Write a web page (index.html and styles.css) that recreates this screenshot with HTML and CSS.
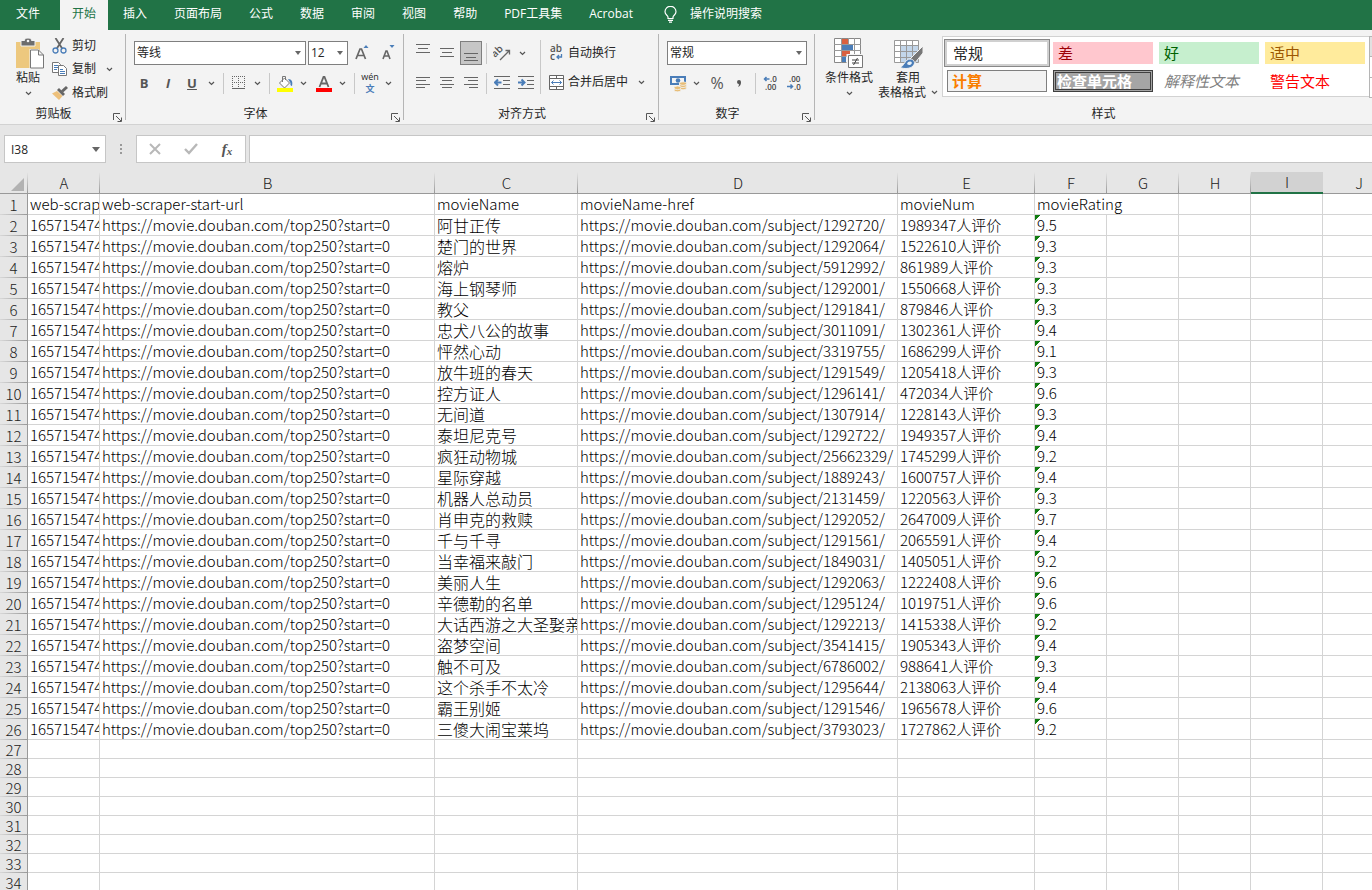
FILE: index.html
```html
<!DOCTYPE html>
<html lang="zh-CN">
<head>
<meta charset="utf-8">
<title>电影数据</title>
<link rel="stylesheet" href="styles.css">
</head>
<body>
<svg class="defs" width="0" height="0" aria-hidden="true">
  <symbol id="chev" viewBox="0 0 7 5"><path d="M1 1l2.500 2.500L6 1" fill="none" stroke="#555" stroke-width="1.200"/></symbol>
  <symbol id="launch" viewBox="0 0 9 9"><path d="M.5 7V.5H7M3 3l5 5M8.500 4.500v4h-4" fill="none" stroke="#555"/></symbol>
</svg>

<nav class="tabs">
  <button class="tab file">文件</button>
  <button class="tab active">开始</button>
  <button class="tab">插入</button>
  <button class="tab">页面布局</button>
  <button class="tab">公式</button>
  <button class="tab">数据</button>
  <button class="tab">审阅</button>
  <button class="tab">视图</button>
  <button class="tab">帮助</button>
  <button class="tab">PDF工具集</button>
  <button class="tab">Acrobat</button>
  <button class="tab search">
    <svg width="13" height="17" viewBox="0 0 13 17" fill="none" stroke="#fff" stroke-width="1.200"><path d="M4 12.500V11C3.800 9.500 1 8.500 1 5.800a5.300 5.300 0 0 1 11 0C12 8.500 9.200 9.500 9 11v1.500zM4 14.300h5M5 16.200h3"/></svg>
    操作说明搜索
  </button>
</nav>

<section class="ribbon">
  <div class="group clipboard">
    <div class="body">
      <button class="big paste">
        <svg width="28" height="31" viewBox="0 0 28 31"><path d="M0 4h24v26H0z" fill="#edc87e"/><path d="M5 2.500h3.500C8.500.8 10 0 12 0s3.500.8 3.500 2.500H19V8H5z" fill="#6d6d6d" stroke="#f3f3f3"/><circle cx="12" cy="3" r="1.300" fill="#f3f3f3"/><path d="M13.500 11h9l5.500 5.500V31H13.500z" fill="#f3f3f3"/><path d="M14.500 12h8l5 5v13h-13zM22.500 12v5h5" fill="#fff" stroke="#777"/></svg>
        <span>粘贴</span>
        <svg class="chev" width="7" height="5"><use href="#chev"/></svg>
      </button>
      <div class="stack">
        <button class="item">
          <svg width="16" height="16" viewBox="0 0 16 16" fill="none"><path d="M3.500 0L10.500 11M11.500 0L4.500 11" stroke="#666" stroke-width="1.800"/><circle cx="3.500" cy="12.500" r="2.500" stroke="#4a7db8" stroke-width="1.300"/><circle cx="11.500" cy="12.500" r="2.500" stroke="#4a7db8" stroke-width="1.300"/></svg>
          剪切
        </button>
        <div class="pair">
          <button class="item">
            <svg width="16" height="16" viewBox="0 0 16 16"><path d="M.5 1.500h6l2 2v8h-8z" fill="#fff" stroke="#777"/><path d="M2 4.500h4M2 6.500h4M2 8.500h3" stroke="#4a7db8"/><path d="M6.500 4.500h5l3 3v7h-8z" fill="#fff" stroke="#777"/><path d="M8 8.500h3M8 10.500h5M8 12.500h5" stroke="#4a7db8"/></svg>
            复制
          </button>
          <button class="drop" aria-label="复制选项"><svg width="7" height="5"><use href="#chev"/></svg></button>
        </div>
        <button class="item">
          <svg width="16" height="16" viewBox="0 0 16 16"><path d="M0 8.500L5 6l5.500 5-3.500 4z" fill="#edc07b"/><path d="M5 5l2-2 6 6-2 2z" fill="#666"/><path d="M9 5.500L14 1l2 2-5 4.500z" fill="#666"/></svg>
          格式刷
        </button>
      </div>
    </div>
    <div class="foot"><span>剪贴板</span><button class="launch" aria-label="剪贴板设置"><svg width="9" height="9"><use href="#launch"/></svg></button></div>
  </div>

  <div class="group font">
    <div class="body rows">
      <div class="row inset">
        <span class="combo wide"><select aria-label="字体"><option>等线</option></select></span>
        <span class="combo small"><select aria-label="字号"><option>12</option></select></span>
        <button class="tool glyph" aria-label="增大字号"><svg width="14" height="18" viewBox="0 0 14 18"><path d="M1 15L5 5h1.500l4 10M2.500 11.500h6.500" fill="none" stroke="#666" stroke-width="1.700"/><path d="M8.500 4h5L11 1z" fill="#4a7db8"/></svg></button>
        <button class="tool glyph" aria-label="减小字号"><svg width="14" height="18" viewBox="0 0 14 18"><path d="M2 15l3-8h1l3 8M3 12h5" fill="none" stroke="#666" stroke-width="1.600"/><path d="M8.500 1h5L11 4z" fill="#4a7db8"/></svg></button>
      </div>
      <div class="row">
        <button class="tool glyph bold">B</button>
        <button class="tool glyph italic">I</button>
        <button class="tool glyph under">U</button>
        <button class="drop" aria-label="下划线选项"><svg width="7" height="5"><use href="#chev"/></svg></button>
        <i class="sep"></i>
        <button class="tool" aria-label="边框"><svg width="14" height="14" viewBox="0 0 14 14" fill="none" stroke="#666"><path d="M.5 0v12M6.500 0v12M12.500 0v12M0 .5h13M0 6.500h13" stroke-dasharray="1 1"/><path d="M0 12.500h13"/></svg></button>
        <button class="drop" aria-label="边框选项"><svg width="7" height="5"><use href="#chev"/></svg></button>
        <i class="sep"></i>
        <button class="tool" aria-label="填充颜色"><svg width="17" height="17" viewBox="0 0 17 17"><path d="M2.500 8l5-5 5 5-5 5z" fill="#fff" stroke="#777"/><path d="M5.500 7V1.500h3V5" fill="none" stroke="#777"/><path d="M11 4c4 0 5 3 4 7-1 0-2-1-1.500-3z" fill="#4a7db8"/><path d="M0 13h16v4H0z" fill="#ff0"/></svg></button>
        <button class="drop" aria-label="填充选项"><svg width="7" height="5"><use href="#chev"/></svg></button>
        <button class="tool spaced" aria-label="字体颜色"><svg width="16" height="17" viewBox="0 0 16 17"><path d="M3.500 12l4-10h1l4 10M5 8.500h6" fill="none" stroke="#666" stroke-width="1.800"/><path d="M0 13h16v4H0z" fill="red"/></svg></button>
        <button class="drop" aria-label="颜色选项"><svg width="7" height="5"><use href="#chev"/></svg></button>
        <i class="sep"></i>
        <button class="tool pinyin" aria-label="拼音"><span>wén</span><b>文</b></button>
        <button class="drop" aria-label="拼音选项"><svg width="7" height="5"><use href="#chev"/></svg></button>
      </div>
    </div>
    <div class="foot"><span>字体</span><button class="launch" aria-label="字体设置"><svg width="9" height="9"><use href="#launch"/></svg></button></div>
  </div>

  <div class="group align">
    <div class="body">
      <div class="rows">
        <div class="row gap">
          <button class="tool" aria-label="顶端对齐"><svg width="14" height="18" stroke="#666"><path d="M0 .5h14M2 4.500h10M0 8.500h14"/></svg></button>
          <button class="tool" aria-label="垂直居中"><svg width="14" height="18" stroke="#666"><path d="M0 4.500h14M2 8.500h10M0 12.500h14"/></svg></button>
          <button class="tool on" aria-label="底端对齐"><svg width="14" height="18" stroke="#666"><path d="M0 9.500h14M2 13.500h10M0 16.500h14"/></svg></button>
          <i class="sep"></i>
          <button class="tool" aria-label="方向"><svg width="18" height="18" viewBox="0 0 18 18"><text x="0" y="9" transform="rotate(-45 7 9)" class="ab">ab</text><path d="M7 16l9-9M12.500 6.500H16.500V10.500" fill="none" stroke="#666" stroke-width="1.300"/></svg></button>
          <button class="drop" aria-label="方向选项"><svg width="7" height="5"><use href="#chev"/></svg></button>
        </div>
        <div class="row gap">
          <button class="tool" aria-label="左对齐"><svg width="14" height="12" stroke="#666"><path d="M0 .5h14M0 3.500h10M0 7.500h14M0 10.500h9"/></svg></button>
          <button class="tool" aria-label="居中"><svg width="14" height="12" stroke="#666"><path d="M0 .5h14M2 3.500h10M0 7.500h14M2 10.500h10"/></svg></button>
          <button class="tool" aria-label="右对齐"><svg width="14" height="12" stroke="#666"><path d="M0 .5h14M4 3.500h10M0 7.500h14M5 10.500h9"/></svg></button>
          <i class="sep"></i>
          <button class="tool" aria-label="减少缩进"><svg width="16" height="14" viewBox="0 0 16 14" fill="none"><path d="M0 .5h16M9 4.500h7M9 8.500h7M0 12.500h16" stroke="#666"/><path d="M7.500 6.500H2M4 3.500l-3 3 3 3" stroke="#4a7db8" stroke-width="2"/></svg></button>
          <button class="tool" aria-label="增加缩进"><svg width="16" height="14" viewBox="0 0 16 14" fill="none"><path d="M0 .5h16M9 4.500h7M9 8.500h7M0 12.500h16" stroke="#666"/><path d="M0 6.500h6M3.500 3.500l3 3-3 3" stroke="#4a7db8" stroke-width="2"/></svg></button>
        </div>
      </div>
      <i class="sep tall"></i>
      <div class="rows">
        <button class="row item">
          <svg width="15" height="17" viewBox="0 0 15 17"><text x="1" y="8" class="ab">ab</text><text x="1" y="16" class="ab">c</text><path d="M12.500 10v3H8.500M10 11l-2 2 2 2" fill="none" stroke="#4a7db8" stroke-width="1.300"/></svg>
          自动换行
        </button>
        <div class="row">
          <button class="item">
            <svg width="15" height="15" viewBox="0 0 15 15" fill="none"><path d="M.5.5h14v14H.5z" fill="#fff" stroke="#666"/><path d="M0 3.500h15M0 11.500h15M7.500 0v3.500M7.500 11.500V15" stroke="#666"/><path d="M2.500 7.500h10M4.500 5.500l-2 2 2 2M10.500 5.500l2 2-2 2" stroke="#4a7db8"/></svg>
            合并后居中
          </button>
          <button class="drop far" aria-label="合并选项"><svg width="7" height="5"><use href="#chev"/></svg></button>
        </div>
      </div>
    </div>
    <div class="foot"><span>对齐方式</span><button class="launch" aria-label="对齐设置"><svg width="9" height="9"><use href="#launch"/></svg></button></div>
  </div>

  <div class="group number">
    <div class="body rows">
      <div class="row"><span class="combo full"><select aria-label="数字格式"><option>常规</option></select></span></div>
      <div class="row">
        <button class="tool" aria-label="会计格式"><svg width="17" height="17" viewBox="0 0 17 17"><path d="M0 1h16v9H0z" fill="#4a7db8"/><path d="M2 3h12v5H2z" fill="#f3f3f3"/><circle cx="8" cy="5.500" r="2.300" fill="#4a7db8"/><path d="M9 8h8v7H9z" fill="#f3f3f3"/><g fill="#e8bd76" stroke="#f3f3f3" stroke-width=".8"><ellipse cx="13" cy="13" rx="3.500" ry="1.800"/><ellipse cx="13" cy="10.800" rx="3.500" ry="1.800"/><ellipse cx="13" cy="8.600" rx="3.500" ry="1.800"/><ellipse cx="7.500" cy="15" rx="3.500" ry="1.800"/><ellipse cx="7.500" cy="12.800" rx="3.500" ry="1.800"/></g></svg></button>
        <button class="drop" aria-label="会计选项"><svg width="7" height="5"><use href="#chev"/></svg></button>
        <button class="tool spaced percent">%</button>
        <button class="tool" aria-label="千位分隔"><svg width="6" height="9" viewBox="0 0 6 9"><path d="M1 3a2 2 0 1 1 4 0c0 3-1 4-3 5 1-1.500 1-2 .8-3A2 2 0 0 1 1 3z" fill="#555"/></svg></button>
        <i class="sep"></i>
        <button class="tool" aria-label="增加小数"><svg width="16" height="16" viewBox="0 0 16 16"><text x="7" y="7" class="dec">.0</text><text x="2" y="15" class="dec">.00</text><path d="M6.500 4H2M3.500 2l-2 2 2 2" fill="none" stroke="#4a7db8" stroke-width="1.500"/></svg></button>
        <button class="tool spacer" aria-label="减少小数"><svg width="16" height="16" viewBox="0 0 16 16"><text x="2" y="7" class="dec">.00</text><text x="7" y="15" class="dec">.0</text><path d="M0 11.500h5M3.500 9.500l2 2-2 2" fill="none" stroke="#4a7db8" stroke-width="1.500"/></svg></button>
      </div>
    </div>
    <div class="foot"><span>数字</span><button class="launch" aria-label="数字设置"><svg width="9" height="9"><use href="#launch"/></svg></button></div>
  </div>

  <div class="group styles">
    <div class="body">
      <button class="big cond">
        <svg width="31" height="31" viewBox="0 0 31 31"><path d="M.5.5h26v24H.5z" fill="#fff" stroke="#888"/><path d="M7.500 0v25M14.500 0v25M20.500 0v25M0 6.500h27M0 12.500h27M0 18.500h27" stroke="#999"/><path d="M8 1h6v5H8z" fill="#d9603f"/><path d="M8 7h11v5H8z" fill="#4a7db8"/><path d="M8 13h8v5H8z" fill="#d9603f"/><path d="M8 19h4v5H8z" fill="#4a7db8"/><path d="M12.500 16H30v15H12.500z" fill="#f3f3f3"/><path d="M14.500 17.500h14v12h-14z" fill="#fff" stroke="#777"/><path d="M18 22h7M18 25h7M23.500 20l-4 7" stroke="#444" fill="none"/></svg>
        <span>条件格式</span>
        <svg class="chev" width="7" height="5"><use href="#chev"/></svg>
      </button>
      <button class="big fmt">
        <svg width="29" height="31" viewBox="0 0 29 31"><path d="M.5 2.500h24v22H.5z" fill="#fff"/><path d="M7 8h17v16H7z" fill="#c3d6ea"/><path d="M.5 2.500h24v22H.5zM6.500 2v23M12.500 2v23M18.500 2v23M0 7.500h25M0 13.500h25M0 19.500h25" fill="none" stroke="#999"/><path d="M29 8v7l-9 11-5-4z" fill="#777" stroke="#f3f3f3"/><path d="M6 29.500c4-1 5-8.500 10-8.500 4 0 6 4 3 7-3 3-9 3-13 1.500z" fill="#4a7db8" stroke="#f3f3f3"/><path d="M13 26c1-3 4-3 5-1-1 2-3 3-5 1z" fill="#e9f1f8"/></svg>
        <span>套用</span>
        <span class="line">表格格式<svg class="chev" width="7" height="5"><use href="#chev"/></svg></span>
      </button>
      <div class="gallery">
        <button class="style normal">常规</button>
        <button class="style bad">差</button>
        <button class="style good">好</button>
        <button class="style neutral">适中</button>
        <button class="style calc">计算</button>
        <button class="style check">检查单元格</button>
        <button class="style explain">解释性文本</button>
        <button class="style warn">警告文本</button>
      </div>
      <div class="scroller"><button class="off" aria-label="上一行"></button><button aria-label="下一行"></button><button aria-label="更多样式"></button></div>
    </div>
    <div class="foot"><span>样式</span></div>
  </div>
</section>

<section class="formula">
  <div class="namebox"><input type="text" value="I38" aria-label="名称框"></div>
  <svg class="dots" width="2" height="12" fill="#999"><path d="M0 1h2v2H0zM0 5h2v2H0zM0 9h2v2H0z"/></svg>
  <div class="actions">
    <button aria-label="取消"><svg width="12" height="12" fill="none" stroke="#b8b8b8" stroke-width="2"><path d="M1 1l10 10M11 1L1 11"/></svg></button>
    <button aria-label="输入"><svg width="14" height="12" fill="none" stroke="#b8b8b8" stroke-width="2.400"><path d="M1 6l4 4L13 1"/></svg></button>
    <button class="fx">f<small>x</small></button>
  </div>
  <input class="entry" type="text" aria-label="编辑栏">
</section>

<main class="sheet">
<table>
<colgroup><col class="w-head"><col class="w-std"><col class="w-url"><col class="w-name"><col class="w-href"><col class="w-num"><col class="w-std"><col class="w-std"><col class="w-std"><col class="w-std"><col class="w-std"></colgroup>
<thead><tr><th class="corner"><svg width="13" height="13"><path d="M13 0v13H0z" fill="#b2b2b2"/></svg></th><th>A</th><th>B</th><th>C</th><th>D</th><th>E</th><th>F</th><th>G</th><th>H</th><th class="picked">I</th><th>J</th></tr></thead>
<tbody>
<tr><th>1</th><td>web-scraper-order</td><td>web-scraper-start-url</td><td>movieName</td><td>movieName-href</td><td>movieNum</td><td colspan="2">movieRating</td><td></td><td></td><td></td></tr>
<tr><th>2</th><td>165715474</td><td>https://movie.douban.com/top250?start=0</td><td class="zh">阿甘正传</td><td>https://movie.douban.com/subject/1292720/</td><td>1989347人评价</td><td class="flag">9.5</td><td></td><td></td><td></td><td></td></tr>
<tr><th>3</th><td>165715474</td><td>https://movie.douban.com/top250?start=0</td><td class="zh">楚门的世界</td><td>https://movie.douban.com/subject/1292064/</td><td>1522610人评价</td><td class="flag">9.3</td><td></td><td></td><td></td><td></td></tr>
<tr><th>4</th><td>165715474</td><td>https://movie.douban.com/top250?start=0</td><td class="zh">熔炉</td><td>https://movie.douban.com/subject/5912992/</td><td>861989人评价</td><td class="flag">9.3</td><td></td><td></td><td></td><td></td></tr>
<tr><th>5</th><td>165715474</td><td>https://movie.douban.com/top250?start=0</td><td class="zh">海上钢琴师</td><td>https://movie.douban.com/subject/1292001/</td><td>1550668人评价</td><td class="flag">9.3</td><td></td><td></td><td></td><td></td></tr>
<tr><th>6</th><td>165715474</td><td>https://movie.douban.com/top250?start=0</td><td class="zh">教父</td><td>https://movie.douban.com/subject/1291841/</td><td>879846人评价</td><td class="flag">9.3</td><td></td><td></td><td></td><td></td></tr>
<tr><th>7</th><td>165715474</td><td>https://movie.douban.com/top250?start=0</td><td class="zh">忠犬八公的故事</td><td>https://movie.douban.com/subject/3011091/</td><td>1302361人评价</td><td class="flag">9.4</td><td></td><td></td><td></td><td></td></tr>
<tr><th>8</th><td>165715474</td><td>https://movie.douban.com/top250?start=0</td><td class="zh">怦然心动</td><td>https://movie.douban.com/subject/3319755/</td><td>1686299人评价</td><td class="flag">9.1</td><td></td><td></td><td></td><td></td></tr>
<tr><th>9</th><td>165715474</td><td>https://movie.douban.com/top250?start=0</td><td class="zh">放牛班的春天</td><td>https://movie.douban.com/subject/1291549/</td><td>1205418人评价</td><td class="flag">9.3</td><td></td><td></td><td></td><td></td></tr>
<tr><th>10</th><td>165715474</td><td>https://movie.douban.com/top250?start=0</td><td class="zh">控方证人</td><td>https://movie.douban.com/subject/1296141/</td><td>472034人评价</td><td class="flag">9.6</td><td></td><td></td><td></td><td></td></tr>
<tr><th>11</th><td>165715474</td><td>https://movie.douban.com/top250?start=0</td><td class="zh">无间道</td><td>https://movie.douban.com/subject/1307914/</td><td>1228143人评价</td><td class="flag">9.3</td><td></td><td></td><td></td><td></td></tr>
<tr><th>12</th><td>165715474</td><td>https://movie.douban.com/top250?start=0</td><td class="zh">泰坦尼克号</td><td>https://movie.douban.com/subject/1292722/</td><td>1949357人评价</td><td class="flag">9.4</td><td></td><td></td><td></td><td></td></tr>
<tr><th>13</th><td>165715474</td><td>https://movie.douban.com/top250?start=0</td><td class="zh">疯狂动物城</td><td>https://movie.douban.com/subject/25662329/</td><td>1745299人评价</td><td class="flag">9.2</td><td></td><td></td><td></td><td></td></tr>
<tr><th>14</th><td>165715474</td><td>https://movie.douban.com/top250?start=0</td><td class="zh">星际穿越</td><td>https://movie.douban.com/subject/1889243/</td><td>1600757人评价</td><td class="flag">9.4</td><td></td><td></td><td></td><td></td></tr>
<tr><th>15</th><td>165715474</td><td>https://movie.douban.com/top250?start=0</td><td class="zh">机器人总动员</td><td>https://movie.douban.com/subject/2131459/</td><td>1220563人评价</td><td class="flag">9.3</td><td></td><td></td><td></td><td></td></tr>
<tr><th>16</th><td>165715474</td><td>https://movie.douban.com/top250?start=0</td><td class="zh">肖申克的救赎</td><td>https://movie.douban.com/subject/1292052/</td><td>2647009人评价</td><td class="flag">9.7</td><td></td><td></td><td></td><td></td></tr>
<tr><th>17</th><td>165715474</td><td>https://movie.douban.com/top250?start=0</td><td class="zh">千与千寻</td><td>https://movie.douban.com/subject/1291561/</td><td>2065591人评价</td><td class="flag">9.4</td><td></td><td></td><td></td><td></td></tr>
<tr><th>18</th><td>165715474</td><td>https://movie.douban.com/top250?start=0</td><td class="zh">当幸福来敲门</td><td>https://movie.douban.com/subject/1849031/</td><td>1405051人评价</td><td class="flag">9.2</td><td></td><td></td><td></td><td></td></tr>
<tr><th>19</th><td>165715474</td><td>https://movie.douban.com/top250?start=0</td><td class="zh">美丽人生</td><td>https://movie.douban.com/subject/1292063/</td><td>1222408人评价</td><td class="flag">9.6</td><td></td><td></td><td></td><td></td></tr>
<tr><th>20</th><td>165715474</td><td>https://movie.douban.com/top250?start=0</td><td class="zh">辛德勒的名单</td><td>https://movie.douban.com/subject/1295124/</td><td>1019751人评价</td><td class="flag">9.6</td><td></td><td></td><td></td><td></td></tr>
<tr><th>21</th><td>165715474</td><td>https://movie.douban.com/top250?start=0</td><td class="zh">大话西游之大圣娶亲</td><td>https://movie.douban.com/subject/1292213/</td><td>1415338人评价</td><td class="flag">9.2</td><td></td><td></td><td></td><td></td></tr>
<tr><th>22</th><td>165715474</td><td>https://movie.douban.com/top250?start=0</td><td class="zh">盗梦空间</td><td>https://movie.douban.com/subject/3541415/</td><td>1905343人评价</td><td class="flag">9.4</td><td></td><td></td><td></td><td></td></tr>
<tr><th>23</th><td>165715474</td><td>https://movie.douban.com/top250?start=0</td><td class="zh">触不可及</td><td>https://movie.douban.com/subject/6786002/</td><td>988641人评价</td><td class="flag">9.3</td><td></td><td></td><td></td><td></td></tr>
<tr><th>24</th><td>165715474</td><td>https://movie.douban.com/top250?start=0</td><td class="zh">这个杀手不太冷</td><td>https://movie.douban.com/subject/1295644/</td><td>2138063人评价</td><td class="flag">9.4</td><td></td><td></td><td></td><td></td></tr>
<tr><th>25</th><td>165715474</td><td>https://movie.douban.com/top250?start=0</td><td class="zh">霸王别姬</td><td>https://movie.douban.com/subject/1291546/</td><td>1965678人评价</td><td class="flag">9.6</td><td></td><td></td><td></td><td></td></tr>
<tr><th>26</th><td>165715474</td><td>https://movie.douban.com/top250?start=0</td><td class="zh">三傻大闹宝莱坞</td><td>https://movie.douban.com/subject/3793023/</td><td>1727862人评价</td><td class="flag">9.2</td><td></td><td></td><td></td><td></td></tr>
</tbody>
<tbody class="blank">
<tr><th>27</th><td></td><td></td><td></td><td></td><td></td><td></td><td></td><td></td><td></td><td></td></tr>
<tr><th>28</th><td></td><td></td><td></td><td></td><td></td><td></td><td></td><td></td><td></td><td></td></tr>
<tr><th>29</th><td></td><td></td><td></td><td></td><td></td><td></td><td></td><td></td><td></td><td></td></tr>
<tr><th>30</th><td></td><td></td><td></td><td></td><td></td><td></td><td></td><td></td><td></td><td></td></tr>
<tr><th>31</th><td></td><td></td><td></td><td></td><td></td><td></td><td></td><td></td><td></td><td></td></tr>
<tr><th>32</th><td></td><td></td><td></td><td></td><td></td><td></td><td></td><td></td><td></td><td></td></tr>
<tr><th>33</th><td></td><td></td><td></td><td></td><td></td><td></td><td></td><td></td><td></td><td></td></tr>
<tr><th>34</th><td></td><td></td><td></td><td></td><td></td><td></td><td></td><td></td><td></td><td></td></tr>
</tbody>
</table>
</main>
</body>
</html>
```

FILE: styles.css
```css
* { box-sizing: border-box; }

body {
  margin: 0;
  height: 100vh;
  display: flex;
  flex-direction: column;
  overflow: hidden;
  background: #e6e6e6;
  color: #262626;
  font: 12px/16px "Open Sans", "Noto Sans CJK SC", sans-serif;
}

button, input, select { font: inherit; color: inherit; }
button { background: none; border: 0; padding: 0; white-space: nowrap; }
svg { flex: none; display: block; }
.defs { position: absolute; }

/* Tab strip */
.tabs { flex: none; display: flex; gap: 3px; height: 30px; background: #217346; color: #fff; }
.tab { padding: 0 12px 2px; }
.tab.file { padding: 0 17px 2px 16px; }
.tab.active { background: #f3f3f3; color: #217346; }
.tab.search { display: flex; align-items: center; gap: 13px; padding-left: 16px; }

/* Ribbon */
.ribbon { flex: none; display: flex; padding: 4px 0; background: #f3f3f3; border-bottom: 1px solid #d2d2d2; }
.group { flex: none; display: flex; flex-direction: column; border-right: 1px solid #b5b5b5; }
.body { display: flex; height: 72px; }
.rows { display: flex; flex-direction: column; gap: 6px; padding-top: 7px; }
.row { display: flex; align-items: center; height: 24px; }
.foot { display: grid; grid-template-columns: 1fr 18px; height: 14px; line-height: 16px; text-align: center; }
.launch { justify-self: end; align-self: end; margin-right: 3px; }

.clipboard { width: 126px; }
.clipboard .body { padding-left: 16px; gap: 8px; }
.font { width: 278px; }
.font .body { padding-left: 6px; }
.inset { padding-left: 2px; gap: 2px; }
.align { width: 255px; }
.align .body { padding-left: 8px; }
.number { width: 156px; }
.number .body { padding-left: 8px; }
.styles { flex: 1; min-width: 0; border-right: 0; }
.styles .body { padding-left: 4px; }

.big { display: flex; flex-direction: column; align-items: center; padding-top: 4px; }
.big span { line-height: 15px; }
.big svg + span { margin-top: 1px; }
.big .chev { margin-top: 6px; }
.paste span, .paste .chev { margin-right: 4px; }
.cond { width: 60px; }
.fmt { width: 58px; }
.line { display: flex; align-items: center; gap: 5px; }
.big .line .chev { margin-top: 0; }

.item { display: flex; align-items: center; gap: 4px; height: 23px; }
.pair { display: flex; align-items: center; gap: 6px; }
.tool { display: flex; align-items: center; justify-content: center; width: 22px; height: 24px; }
.tool.on { background: #c6c6c6; border: 1px solid #7f7f7f; }
.glyph { width: 24px; font-size: 13px; font-weight: 700; color: #555; }
.italic { font-style: italic; }
.under { text-decoration: underline; }
.gap { gap: 2px; }
.gap .sep { margin: 0 2px; }
.drop { display: flex; align-items: center; justify-content: center; width: 14px; height: 24px; }
.far { margin-left: 6px; }
.sep { width: 1px; height: 21px; margin: 0 4px 0 5px; background: #c8c8c8; }
.sep.tall { height: 54px; margin: 6px 8px 0 3px; }
.spaced { margin-left: 3px; }
.spacer { margin-left: 2px; }
.percent { font-size: 16px; color: #555; }
.pinyin { flex-direction: column; font-size: 9px; line-height: 12px; }
.pinyin b { color: #4a7db8; font-size: 9px; line-height: 12px; }
.ab { font: 600 10px "Open Sans", sans-serif; fill: #555; }
.dec { font: 600 8px "Open Sans", sans-serif; fill: #444; }

.combo { position: relative; display: flex; height: 24px; background: #fff; border: 1px solid #7f7f7f; }
.combo select { width: 100%; border: 0; background: none; appearance: none; padding: 0 2px; }
.combo::after, .namebox::after {
  content: "";
  position: absolute;
  right: 4px;
  top: 9px;
  border: 3px solid transparent;
  border-top: 4px solid #666;
  border-bottom: 0;
}
.wide { width: 172px; }
.small { width: 40px; }
.full { width: 140px; }

.gallery {
  flex: 1;
  display: grid;
  grid-template-columns: repeat(4, 100px);
  grid-template-rows: 22px 22px;
  gap: 6px;
  align-self: flex-start;
  margin: 2px 0 0 5px;
  padding: 5px 4px 4px;
  background: #fff;
  border: 1px solid #d2d2d2;
  border-right: 0;
}
.style { padding: 0 5px; text-align: left; font-size: 15px; line-height: 18px; }
.normal { background: #fff; box-shadow: 0 0 0 2px #d0d0d0, 0 0 0 3px #888; padding: 0 6px; }
.bad { background: #ffc7ce; color: #9c0006; }
.good { background: #c6efce; color: #006100; }
.neutral { background: #ffeb9c; color: #9c5700; }
.calc { background: #f2f2f2; color: #fa7d00; border: 1px solid #7f7f7f; font-weight: 600; padding: 0 4px; }
.check { background: #a5a5a5; color: #fff; border: 3px double #3f3f3f; font-weight: 600; padding: 0 1px; line-height: 14px; }
.explain { color: #7f7f7f; font-style: italic; }
.warn { color: #f00; }
.scroller { width: 3px; height: 62px; margin-top: 2px; display: grid; grid-template-rows: 1fr 1fr 1fr; border-left: 1px solid #b5b5b5; border-bottom: 1px solid #b5b5b5; }
.scroller button { background: #fff; border-top: 1px solid #b5b5b5; }
.scroller .off { background: #e1e1e1; }
.styles .foot { padding-left: 38px; }

/* Formula bar */
.formula { flex: none; display: flex; align-items: flex-start; height: 47px; padding: 10px 0 0 4px; }
.namebox { position: relative; width: 102px; height: 28px; background: #fff; border: 1px solid #c6c6c6; }
.namebox input { width: 80px; height: 26px; border: 0; padding: 0 6px; background: none; }
.namebox::after { right: 5px; top: 11px; border-width: 5px 4px 0; }
.dots { margin: 8px 14px 0; }
.actions { display: flex; width: 110px; height: 28px; background: #fff; border: 1px solid #c6c6c6; }
.actions button { flex: 1; display: flex; align-items: center; justify-content: center; }
.actions .fx { font: italic 700 15px "Liberation Serif", serif; color: #555; }
.fx small { font-size: 11px; padding-top: 4px; }
.entry { flex: 1; min-width: 0; height: 28px; margin-left: 3px; background: #fff; border: 1px solid #c6c6c6; border-right: 0; }

/* Sheet */
.sheet { flex: 1; min-height: 0; overflow: hidden; }
table { width: 1395px; table-layout: fixed; border-collapse: separate; border-spacing: 0; color: #000; font: 300 15px/20px "Noto Sans CJK SC", sans-serif; }
.w-head { width: 28px; }
.w-std { width: 72px; }
.w-url { width: 335px; }
.w-name { width: 143px; }
.w-href { width: 320px; }
.w-num { width: 137px; }
th, td { height: 21px; padding: 0; overflow: hidden; white-space: nowrap; }
td { padding-left: 2px; background: #fff; border-right: 1px solid #d4d4d4; border-bottom: 1px solid #d4d4d4; }
th { font-weight: 300; color: #222; }
thead th {
  border-bottom: 1px solid #999;
  background: linear-gradient(#e6e6e6, #999) right / 1px 100% no-repeat;
}
tbody th {
  border-right: 1px solid #999;
  background: linear-gradient(90deg, #d8d8d8, #999) bottom / 100% 1px no-repeat;
}
thead .picked { background: #d2d2d2; border-bottom: 2px solid #217346; }
.corner svg { margin: 3px 0 0 11px; }
.zh { font-size: 16px; }
.blank th, .blank td { height: 19px; line-height: 18px; }
.flag { background: linear-gradient(135deg, #107c10 4px, #fff 4px); }
```
